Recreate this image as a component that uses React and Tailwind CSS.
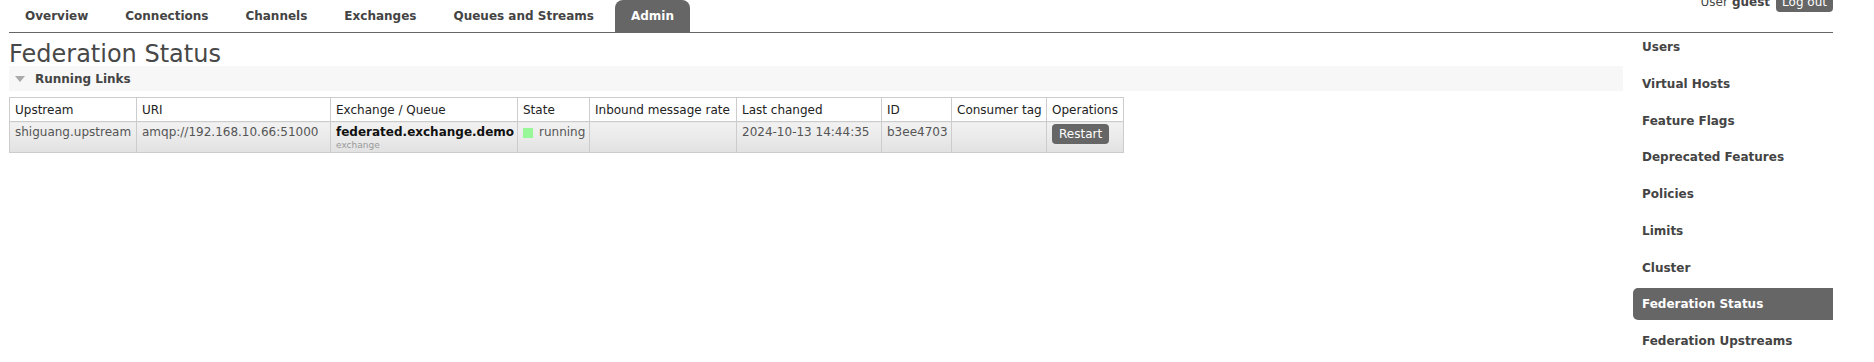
import React from "react";

const tabs = ["Overview", "Connections", "Channels", "Exchanges", "Queues and Streams", "Admin"];
const side = [
  "Users",
  "Virtual Hosts",
  "Feature Flags",
  "Deprecated Features",
  "Policies",
  "Limits",
  "Cluster",
  "Federation Status",
  "Federation Upstreams",
];

const cols = [
  ["Upstream", "w-[127px]"],
  ["URI", "w-[194px]"],
  ["Exchange / Queue", "w-[187px]"],
  ["State", "w-[72px]"],
  ["Inbound message rate", "w-[147px]"],
  ["Last changed", "w-[145px]"],
  ["ID", "w-[70px]"],
  ["Consumer tag", "w-[95px]"],
  ["Operations", "w-[77px]"],
];

const td =
  "border border-[#ccc] h-[31px] px-[5px] pt-[3px] align-top leading-[15px] text-[#555] bg-gradient-to-b from-[#f2f2f2] to-[#e2e2e2] whitespace-nowrap overflow-hidden";

export default function App() {
  return (
    <div className="w-[1874px] h-[362px] overflow-hidden bg-white pl-[9px] pr-[41px] text-[12px] text-[#444] font-['DejaVu_Sans',Verdana,sans-serif]">
      <div className="flex justify-between h-[33px] border-b border-[#666]">
        <ul className="flex gap-[5px]">
          {tabs.map((t) => (
            <li
              key={t}
              className={
                "h-[32px] px-4 flex items-center font-bold " +
                (t === "Admin" ? "bg-[#666] text-white rounded-t-[8px]" : "text-[#444]")
              }
            >
              {t}
            </li>
          ))}
        </ul>
        <div className="flex items-start -mt-[8px] h-[20px] leading-[20px] text-[#444]">
          <span>User</span>
          <span className="font-bold ml-[4px]">guest</span>
          <span className="ml-[6px] h-[20px] px-[6px] bg-[#666] text-white rounded-[4px]">Log out</span>
        </div>
      </div>
      <div className="flex">
        <div className="w-[1614px]">
          <h1 className="mt-[9px] text-[24px] leading-[24px] font-normal text-[#484848]">Federation Status</h1>
          <div className="h-[25px] bg-[#f7f7f7] flex items-center pl-[6px]">
            <svg width="10" height="6" viewBox="0 0 10 6">
              <path d="M0 0 H10 L5 6 Z" fill="#aaa" />
            </svg>
            <span className="ml-[10px] font-bold text-[12px] text-[#444]">Running Links</span>
          </div>
          <table className="mt-[6px] table-fixed border-collapse w-[1114px]">
            <thead>
              <tr>
                {cols.map(([c, w]) => (
                  <th
                    key={c}
                    className={
                      "border border-[#ccc] h-[24px] px-[5px] text-left font-normal text-[#222] whitespace-nowrap " + w
                    }
                  >
                    {c}
                  </th>
                ))}
              </tr>
            </thead>
            <tbody>
              <tr>
                <td className={td}>shiguang.upstream</td>
                <td className={td}>amqp://192.168.10.66:51000</td>
                <td className={td}>
                  <div className="font-bold text-[#111]">federated.exchange.demo</div>
                  <div className="text-[9px] leading-[11px] text-[#999]">exchange</div>
                </td>
                <td className={td}>
                  <span className="inline-flex items-center">
                    <span className="w-[10px] h-[10px] bg-[#98f898] mr-[6px]" />
                    running
                  </span>
                </td>
                <td className={td}></td>
                <td className={td}>2024-10-13 14:44:35</td>
                <td className={td}>b3ee4703</td>
                <td className={td}></td>
                <td className={td + " !pt-[2px]"}>
                  <span className="inline-block h-[20px] leading-[20px] px-[7px] bg-[#666] text-white rounded-[4px]">
                    Restart
                  </span>
                </td>
              </tr>
            </tbody>
          </table>
        </div>
        <div className="w-[200px] ml-[10px] -mt-[2px] flex flex-col gap-[4.75px]">
          {side.map((s) => (
            <div
              key={s}
              className={
                "h-[32px] flex items-center pl-[9px] font-bold " +
                (s === "Federation Status" ? "bg-[#666] text-white rounded-l-[5px]" : "text-[#444]")
              }
            >
              {s}
            </div>
          ))}
        </div>
      </div>
    </div>
  );
}
